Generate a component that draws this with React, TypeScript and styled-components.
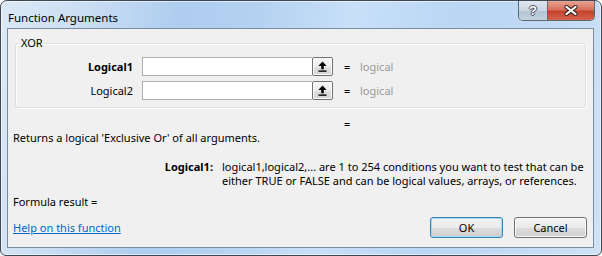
import React from "react";
import styled, { createGlobalStyle } from "styled-components";

const GlobalStyle = createGlobalStyle`
  html, body {
    margin: 0;
    padding: 0;
    background: #ffffff;
  }
  body {
    font-family: "Noto Sans", "Open Sans", sans-serif;
    font-size: 11px;
    color: #000;
  }
`;

const args = [
  { name: "Logical1", bold: true },
  { name: "Logical2", bold: false },
];

const helpLines = [
  "logical1,logical2,... are 1 to 254 conditions you want to test that can be",
  "either TRUE or FALSE and can be logical values, arrays, or references.",
];

export default function App() {
  return (
    <>
      <GlobalStyle />
      <Window>
        <TitleBar>
          <Title>Function Arguments</Title>
          <Caption>
            <HelpButton>
              <HelpGlyph>?</HelpGlyph>
            </HelpButton>
            <CloseButton>
              <svg width="14" height="11" viewBox="0 0 14 11">
                <path d="M2.5 2 L11.5 9 M11.5 2 L2.5 9" stroke="#3b2a27" strokeWidth="4.2" strokeLinecap="round" />
                <path d="M2.5 2 L11.5 9 M11.5 2 L2.5 9" stroke="#ffffff" strokeWidth="2.2" strokeLinecap="round" />
              </svg>
            </CloseButton>
          </Caption>
        </TitleBar>
        <Client>
          <GroupBox>
            <GroupLabel>XOR</GroupLabel>
            {args.map((a) => (
              <ArgRow key={a.name}>
                <ArgLabel $bold={a.bold}>{a.name}</ArgLabel>
                <Field />
                <RefButton>
                  <svg width="9" height="11" viewBox="0 0 9 11">
                    <path d="M4.5 0.5 L8.7 5 H5.8 V8.3 H3.2 V5 H0.3 Z" fill="#000" />
                    <rect x="0.5" y="9.4" width="8" height="1.4" fill="#000" />
                  </svg>
                </RefButton>
                <Equals>=</Equals>
                <ArgValue>logical</ArgValue>
              </ArgRow>
            ))}
          </GroupBox>
          <ResultEquals>=</ResultEquals>
          <Description>Returns a logical 'Exclusive Or' of all arguments.</Description>
          <ArgHelp>
            <ArgHelpName>Logical1:</ArgHelpName>
            <ArgHelpText>
              {helpLines.map((l) => (
                <HelpLine key={l}>{l}</HelpLine>
              ))}
            </ArgHelpText>
          </ArgHelp>
          <FormulaResult>Formula result =</FormulaResult>
          <Footer>
            <HelpLink href="#">Help on this function</HelpLink>
            <Buttons>
              <DialogButton $default>OK</DialogButton>
              <DialogButton>Cancel</DialogButton>
            </Buttons>
          </Footer>
        </Client>
      </Window>
    </>
  );
}

const Window = styled.div`
  width: 602px;
  height: 256px;
  box-sizing: border-box;
  border: 1px solid #3e4853;
  border-radius: 7px 7px 6px 6px;
  padding: 0 7px 7px 6px;
  display: flex;
  flex-direction: column;
  background: linear-gradient(
    100deg,
    #dce9f6 0%,
    #c9ddf3 14%,
    #aecdef 28%,
    #b4d1f1 40%,
    #c8e0f8 55%,
    #bad6f4 72%,
    #c3dcf5 88%,
    #cfe2f6 100%
  );
  box-shadow: inset 0 0 0 1px rgba(255, 255, 255, 0.55);
  overflow: hidden;
`;

const TitleBar = styled.div`
  height: 27px;
  display: flex;
  align-items: flex-start;
  justify-content: space-between;
`;

const Title = styled.div`
  margin: 9px 0 0 1px;
  line-height: 16px;
  font-size: 11.5px;
  color: #000;
`;

const Caption = styled.div`
  display: flex;
  margin-right: -1px;
  border: 1px solid #5d6874;
  border-top: none;
  border-radius: 0 0 5px 5px;
  overflow: hidden;
  height: 19px;
`;

const HelpButton = styled.div`
  width: 28px;
  display: flex;
  align-items: center;
  justify-content: center;
  background: linear-gradient(#dfe7ef 0%, #cbd6e2 50%, #b3c3d3 51%, #c3d2e0 100%);
  border-right: 1px solid #5d6874;
`;

const HelpGlyph = styled.span`
  font-family: "Liberation Sans", sans-serif;
  font-weight: bold;
  font-size: 13px;
  line-height: 13px;
  color: #fff;
  text-shadow: 1px 0 #46505c, -1px 0 #46505c, 0 1px #46505c, 0 -1px #46505c;
`;

const CloseButton = styled.div`
  width: 46px;
  display: flex;
  align-items: center;
  justify-content: center;
  background: linear-gradient(#e8a493 0%, #d7705c 45%, #c4432d 55%, #d5634c 100%);
`;

const Client = styled.div`
  flex: 1;
  display: flex;
  flex-direction: column;
  background: #f0f0f0;
  border: 1px solid #7d8c9c;
`;

const GroupBox = styled.div`
  position: relative;
  margin: 14px 7px 0 7px;
  height: 65px;
  box-sizing: border-box;
  border: 1px solid #d5dfe5;
  border-radius: 3px;
  box-shadow: inset 1px 1px 0 #ffffff, 1px 1px 0 #ffffff;
  padding: 13px 0 7px 0;
  display: flex;
  flex-direction: column;
  gap: 5px;
`;

const GroupLabel = styled.span`
  position: absolute;
  left: 4px;
  top: -8px;
  padding: 0 1px;
  line-height: 14px;
  background: #f0f0f0;
  color: #000;
`;

const ArgRow = styled.div`
  display: flex;
  align-items: center;
  height: 19px;
`;

const ArgLabel = styled.span<{ $bold: boolean }>`
  width: 117px;
  margin-right: 9px;
  text-align: right;
  font-weight: ${(p) => (p.$bold ? 700 : 400)};
`;

const Field = styled.div`
  width: 170px;
  height: 19px;
  box-sizing: border-box;
  background: #fff;
  border: 1px solid #abadb3;
  border-right: none;
`;

const RefButton = styled.div`
  width: 21px;
  height: 19px;
  box-sizing: border-box;
  border: 1px solid #707070;
  border-radius: 2px;
  background: linear-gradient(#f6f6f6 0%, #ececec 50%, #dfdfdf 51%, #d4d4d4 100%);
  box-shadow: inset 0 0 0 1px #fcfcfc;
  display: flex;
  align-items: center;
  justify-content: center;
`;

const Equals = styled.span`
  margin-left: 11px;
  width: 16px;
`;

const ArgValue = styled.span`
  color: #999999;
`;

const ResultEquals = styled.div`
  margin: 9px 0 0 336px;
  line-height: 14px;
`;

const Description = styled.div`
  margin: 0 0 0 5px;
  line-height: 14px;
`;

const ArgHelp = styled.div`
  display: flex;
  margin-top: 15px;
  line-height: 14px;
`;

const ArgHelpName = styled.span`
  width: 205px;
  text-align: right;
  font-weight: 700;
  flex-shrink: 0;
`;

const ArgHelpText = styled.div`
  margin-left: 9px;
  display: flex;
  flex-direction: column;
`;

const HelpLine = styled.span`
  white-space: nowrap;
`;

const FormulaResult = styled.div`
  margin: 7px 0 0 5px;
  line-height: 14px;
`;

const Footer = styled.div`
  margin-top: auto;
  padding: 0 6px 9px 5px;
  display: flex;
  align-items: center;
  justify-content: space-between;
`;

const HelpLink = styled.a`
  color: #0066cc;
  text-decoration: underline;
`;

const Buttons = styled.div`
  display: flex;
  gap: 11px;
`;

const DialogButton = styled.button<{ $default?: boolean }>`
  width: 73px;
  height: 21px;
  padding: 0;
  font: inherit;
  color: #000;
  border-radius: 3px;
  border: 1px solid ${(p) => (p.$default ? "#3c7fb1" : "#707070")};
  background: linear-gradient(#f2f2f2 0%, #ebebeb 50%, #dddddd 51%, #cfcfcf 100%);
  box-shadow: inset 0 0 0 1px ${(p) => (p.$default ? "#9fdcfa" : "#fcfcfc")};
`;
